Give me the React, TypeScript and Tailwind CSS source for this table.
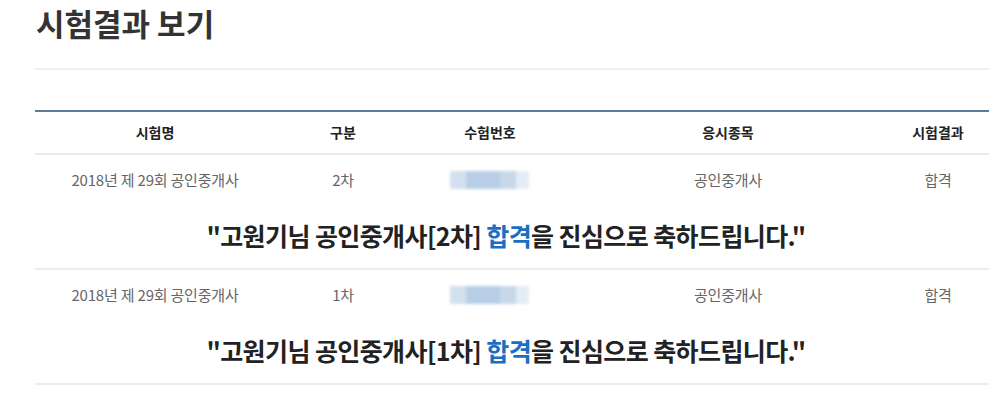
import React from "react";

const font = { fontFamily: '"Noto Sans CJK KR", "Noto Sans", sans-serif' };

function Blur() {
  return (
    <div className="flex h-[18px] w-[79px] blur-[1.5px]">
      <div className="w-[16px] bg-[#d3e0ee]" />
      <div className="w-[34px] bg-[#b8cee6]" />
      <div className="w-[16px] bg-[#c8d8ea]" />
      <div className="w-[13px] bg-[#e4edf6]" />
    </div>
  );
}

function Block({ cha }: { cha: string }) {
  return (
    <>
      <div className="grid grid-cols-[240px_136px_158px_318px_102px] h-[50px] items-center text-center text-[15px] tracking-[-0.2px] text-[#666]">
        <div>2018년 제 29회 공인중개사</div>
        <div>{cha}</div>
        <div className="flex justify-center pr-[2px]"><Blur /></div>
        <div>공인중개사</div>
        <div>합격</div>
      </div>
      <div className="h-[65px] flex items-center justify-center border-b-2 border-[#ececec] text-[25px] font-bold text-[#222] pb-[2px] pr-[12px] tracking-[-0.6px]">
        <span>
          "고원기님 공인중개사[{cha}] <span className="text-[#1b6fc2]">합격</span>을 진심으로 축하드립니다."
        </span>
      </div>
    </>
  );
}

export default function App() {
  return (
    <div className="w-[1000px] h-[403px] bg-white overflow-hidden" style={font}>
      <div className="pl-[35px] w-[989px]">
        <h1 className="text-[31px] font-semibold text-[#333] leading-[45px] pl-[1px]">시험결과 보기</h1>
        <div className="mt-[23px] h-[2px] bg-[#efefef]" />
        <div className="mt-[40px] h-[2px] bg-[#5a7d9c]" />
        <div className="grid grid-cols-[240px_136px_158px_318px_102px] h-[43px] items-center text-center text-[14px] font-semibold text-[#222] border-b-2 border-[#ececec]">
          <div>시험명</div>
          <div>구분</div>
          <div>수험번호</div>
          <div>응시종목</div>
          <div>시험결과</div>
        </div>
        <Block cha="2차" />
        <Block cha="1차" />
      </div>
    </div>
  );
}
